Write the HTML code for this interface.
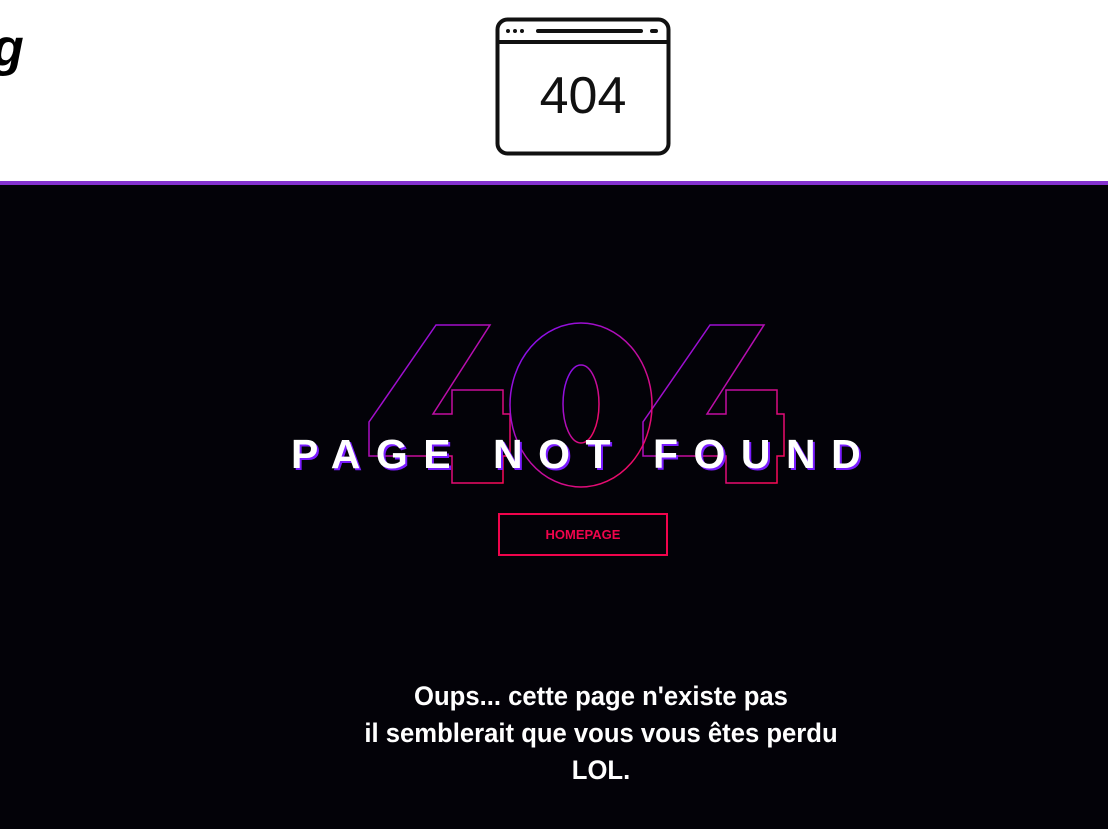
<!DOCTYPE html>
<html><head><meta charset="utf-8"><style>
html,body{margin:0;padding:0;width:1108px;height:829px;overflow:hidden;background:#030208;font-family:"Liberation Sans",sans-serif}
.hdr{position:absolute;left:0;top:0;width:1108px;height:181px;background:#fff}
.bar{position:absolute;left:0;top:181px;width:1108px;height:4px;background:#8532d0}
.g{position:absolute;left:-8px;top:18px;font:italic bold 52px "Liberation Sans Narrow","Liberation Sans",sans-serif;color:#000}
.title{position:absolute;left:291px;top:430px;white-space:nowrap;color:#fff;font-weight:bold;font-size:41px;letter-spacing:15.5px;text-shadow:2px 2px 0 #7a1cff;line-height:48px}
.btn{position:absolute;left:498px;top:513px;width:166px;height:39px;border:2px solid #f0044c;color:#f0044c;font-weight:bold;font-size:13px;text-align:center;line-height:39px}
.msg{position:absolute;left:0;width:1202px;top:678px;text-align:center;color:#fff;font:bold 27px/37px "Liberation Sans Narrow","Liberation Sans",sans-serif;transform:scaleX(0.95);transform-origin:601px 0;letter-spacing:0}
</style></head><body>
<div class="hdr"></div>
<div class="g">g</div>
<svg style="position:absolute;left:0;top:0" width="1108" height="200">
<rect x="497.5" y="19.5" width="171" height="134" rx="10" fill="none" stroke="#111" stroke-width="4"/>
<line x1="497" y1="42" x2="669" y2="42" stroke="#111" stroke-width="4"/>
<circle cx="508" cy="31" r="2" fill="#111"/><circle cx="515" cy="31" r="2" fill="#111"/><circle cx="522" cy="31" r="2" fill="#111"/>
<line x1="538" y1="31" x2="641" y2="31" stroke="#111" stroke-width="4" stroke-linecap="round"/>
<line x1="652" y1="31" x2="656" y2="31" stroke="#111" stroke-width="4" stroke-linecap="round"/>
<text x="583" y="113" text-anchor="middle" font-family="Liberation Sans Narrow, Liberation Sans, sans-serif" font-size="52" fill="#111">404</text>
</svg>
<div class="bar"></div>
<svg style="position:absolute;left:0;top:0" width="1108" height="829">
<defs><linearGradient id="gr" x1="0" y1="0" x2="1" y2="1"><stop offset="0" stop-color="#7a10ff"/><stop offset="1" stop-color="#ff0a50"/></linearGradient></defs>
<g fill="none" stroke="url(#gr)" stroke-width="1.5">
<path id="four" d="M436 325 L490 325 L433 414 L452 414 L452 390 L503 390 L503 414 L510 414 L510 456 L503 456 L503 483 L452 483 L452 456 L369 456 L369 422 Z"/>
<use href="#four" transform="translate(274,0)"/>
<ellipse cx="581" cy="405" rx="71" ry="82"/>
<ellipse cx="581" cy="404" rx="18" ry="39"/>
</g>
</svg>
<div class="title">PAGE NOT FOUND</div>
<div class="btn">HOMEPAGE</div>
<div class="msg">Oups... cette page n'existe pas<br>il semblerait que vous vous êtes perdu<br>LOL.</div>
</body></html>
